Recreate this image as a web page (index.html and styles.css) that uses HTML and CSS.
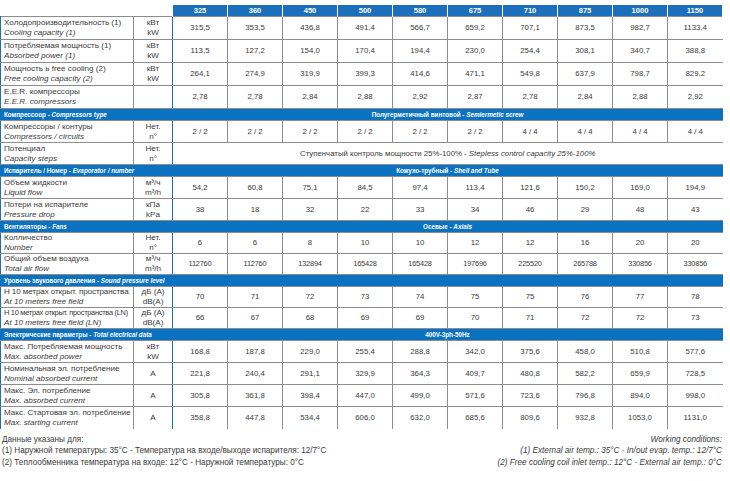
FILE: index.html
```html
<!DOCTYPE html>
<html lang="ru">
<head>
<meta charset="utf-8">
<title>Технические характеристики</title>
<link rel="stylesheet" href="styles.css">
</head>
<body>
<table class="spec">
  <colgroup>
    <col class="c-label"><col class="c-unit">
    <col class="c-val"><col class="c-val"><col class="c-val"><col class="c-val"><col class="c-val">
    <col class="c-val"><col class="c-val"><col class="c-val"><col class="c-val"><col class="c-val">
  </colgroup>
  <thead>
    <tr class="head">
      <th class="blank"></th><th class="blank"></th>
      <th>325</th><th>360</th><th>450</th><th>500</th><th>580</th><th>675</th><th>710</th><th>875</th><th>1000</th><th>1150</th>
    </tr>
  </thead>
  <tbody>
    <tr class="r23">
      <td class="lbl">Холодопроизводительность (1)<br><i>Cooling capacity (1)</i></td>
      <td class="unit">кВт<br>kW</td>
      <td>315,5</td><td>353,5</td><td>436,8</td><td>491,4</td><td>566,7</td><td>659,2</td><td>707,1</td><td>873,5</td><td>982,7</td><td>1133,4</td>
    </tr>
    <tr class="r23">
      <td class="lbl">Потребляемая мощность (1)<br><i>Absorbed power (1)</i></td>
      <td class="unit">кВт<br>kW</td>
      <td>113,5</td><td>127,2</td><td>154,0</td><td>170,4</td><td>194,4</td><td>230,0</td><td>254,4</td><td>308,1</td><td>340,7</td><td>388,8</td>
    </tr>
    <tr class="r23">
      <td class="lbl">Мощность ь free cooling (2)<br><i>Free cooling capacity (2)</i></td>
      <td class="unit">кВт<br>kW</td>
      <td>264,1</td><td>274,9</td><td>319,9</td><td>399,3</td><td>414,6</td><td>471,1</td><td>549,8</td><td>637,9</td><td>798,7</td><td>829,2</td>
    </tr>
    <tr class="r23">
      <td class="lbl">E.E.R. компрессоры<br><i>E.E.R. compressors</i></td>
      <td class="unit"></td>
      <td>2,78</td><td>2,78</td><td>2,84</td><td>2,88</td><td>2,92</td><td>2,87</td><td>2,78</td><td>2,84</td><td>2,88</td><td>2,92</td>
    </tr>

    <tr class="sec">
      <td colspan="2" class="sec-lbl">Компрессоор - <i>Compressors type</i></td>
      <td colspan="10" class="sec-val">Полугерметичный винтовой - <i>Semiermetic screw</i></td>
    </tr>
    <tr class="r22">
      <td class="lbl">Компрессоры / контуры<br><i>Compressors / circuits</i></td>
      <td class="unit">Нет.<br>n°</td>
      <td>2 / 2</td><td>2 / 2</td><td>2 / 2</td><td>2 / 2</td><td>2 / 2</td><td>2 / 2</td><td>4 / 4</td><td>4 / 4</td><td>4 / 4</td><td>4 / 4</td>
    </tr>
    <tr class="r22">
      <td class="lbl">Потенциал<br><i>Capacity steps</i></td>
      <td class="unit">Нет.<br>n°</td>
      <td colspan="10" class="span">Ступенчатый контроль мощности 25%-100% - <i>Stepless control capacity 25%-100%</i></td>
    </tr>

    <tr class="sec">
      <td colspan="2" class="sec-lbl">Испаритель / Номер - <i>Evaporator / number</i></td>
      <td colspan="10" class="sec-val">Кожухо-трубный - <i>Shell and Tube</i></td>
    </tr>
    <tr class="r22">
      <td class="lbl">Объем жидкости<br><i>Liquid flow</i></td>
      <td class="unit">м³/ч<br>m³/h</td>
      <td>54,2</td><td>60,8</td><td>75,1</td><td>84,5</td><td>97,4</td><td>113,4</td><td>121,6</td><td>150,2</td><td>169,0</td><td>194,9</td>
    </tr>
    <tr class="r22">
      <td class="lbl">Потери на испарителе<br><i>Pressure drop</i></td>
      <td class="unit">кПа<br>kPa</td>
      <td>38</td><td>18</td><td>32</td><td>22</td><td>33</td><td>34</td><td>46</td><td>29</td><td>48</td><td>43</td>
    </tr>

    <tr class="sec">
      <td colspan="2" class="sec-lbl">Вентиляторы - <i>Fans</i></td>
      <td colspan="10" class="sec-val">Осевые - <i>Axials</i></td>
    </tr>
    <tr class="r21">
      <td class="lbl">Колличество<br><i>Number</i></td>
      <td class="unit">Нет.<br>n°</td>
      <td>6</td><td>6</td><td>8</td><td>10</td><td>10</td><td>12</td><td>12</td><td>16</td><td>20</td><td>20</td>
    </tr>
    <tr class="r21">
      <td class="lbl">Общий объем воздуха<br><i>Total air flow</i></td>
      <td class="unit">м³/ч<br>m³/h</td>
      <td class="sm">112760</td><td class="sm">112760</td><td class="sm">132894</td><td class="sm">165428</td><td class="sm">165428</td><td class="sm">197696</td><td class="sm">225520</td><td class="sm">265788</td><td class="sm">330856</td><td class="sm">330856</td>
    </tr>

    <tr class="sec">
      <td colspan="2" class="sec-lbl">Уровень звукового давления - <i>Sound pressure level</i></td>
      <td colspan="10" class="sec-val"></td>
    </tr>
    <tr class="r21">
      <td class="lbl"><span class="snug">Н 10 метрах открыт. пространства</span><br><i>At 10 meters free field</i></td>
      <td class="unit">дБ (A)<br>dB(A)</td>
      <td>70</td><td>71</td><td>72</td><td>73</td><td>74</td><td>75</td><td>75</td><td>76</td><td>77</td><td>78</td>
    </tr>
    <tr class="r21">
      <td class="lbl"><span class="tight">Н 10 метрах открыт. пространства (LN)</span><br><i>At 10 meters free field (LN)</i></td>
      <td class="unit">дБ (A)<br>dB(A)</td>
      <td>66</td><td>67</td><td>68</td><td>69</td><td>69</td><td>70</td><td>71</td><td>72</td><td>72</td><td>73</td>
    </tr>

    <tr class="sec">
      <td colspan="2" class="sec-lbl">Электрические параметры - <i>Total electrical data</i></td>
      <td colspan="10" class="sec-val">400V-3ph-50Hz</td>
    </tr>
    <tr class="r22">
      <td class="lbl">Макс. Потребляемая мощность<br><i>Max. absorbed power</i></td>
      <td class="unit">кВт<br>kW</td>
      <td>168,8</td><td>187,8</td><td>229,0</td><td>255,4</td><td>288,8</td><td>342,0</td><td>375,6</td><td>458,0</td><td>510,8</td><td>577,6</td>
    </tr>
    <tr class="r22">
      <td class="lbl">Номинальная эл. потребление<br><i>Nominal absorbed current</i></td>
      <td class="unit">A</td>
      <td>221,8</td><td>240,4</td><td>291,1</td><td>329,9</td><td>364,3</td><td>409,7</td><td>480,8</td><td>582,2</td><td>659,9</td><td>728,5</td>
    </tr>
    <tr class="r22">
      <td class="lbl">Макс. Эл. потребление<br><i>Max. absorbed current</i></td>
      <td class="unit">A</td>
      <td>305,8</td><td>361,8</td><td>398,4</td><td>447,0</td><td>499,0</td><td>571,6</td><td>723,6</td><td>796,8</td><td>894,0</td><td>998,0</td>
    </tr>
    <tr class="r22 last">
      <td class="lbl">Макс. Стартовая эл. потребление<br><i>Max. starting current</i></td>
      <td class="unit">A</td>
      <td>358,8</td><td>447,8</td><td>534,4</td><td>606,0</td><td>632,0</td><td>685,6</td><td>809,6</td><td>932,8</td><td>1053,0</td><td>1131,0</td>
    </tr>
  </tbody>
</table>

<div class="notes">
  <div class="notes-ru">
    <div>Данные указаны для:</div>
    <div>(1) Наружной температуры: 35°C - Температура на входе/выходе испарителя: 12/7°C</div>
    <div>(2) Теплообменника температура на входе: 12°C - Наружной температуры: 0°C</div>
  </div>
  <div class="notes-en">
    <div>Working conditions:</div>
    <div>(1) External air temp.: 35°C - In/out evap. temp.: 12/7°C</div>
    <div>(2) Free cooling coil inlet temp.: 12°C - External air temp.: 0°C</div>
  </div>
</div>
</body>
</html>
```

FILE: styles.css
```css
html, body {
  margin: 0;
  padding: 0;
  background: #ffffff;
}

body {
  padding-top: 5px;
  font-family: "Liberation Sans", Arial, sans-serif;
  color: #3a3a3a;
  width: 730px;
}

.spec {
  border-collapse: collapse;
  table-layout: fixed;
  width: 722px;
}

.c-label { width: 133px; }
.c-unit { width: 39px; }
.c-val { width: 55px; }

.spec th,
.spec td {
  padding: 0;
  box-sizing: border-box;
}

/* column header */
.head th {
  height: 11px;
  background: #1c6fba;
  color: #ffffff;
  font-size: 7.6px;
  font-weight: bold;
  text-align: center;
  line-height: 11px;
  border-left: 1px solid #ffffff;
  border-right: 1px solid #ffffff;
}

.head th.blank {
  background: transparent;
  border: none;
}

/* body rows */
.spec tbody td {
  border: 1px solid #8d8d8d;
  font-size: 7.8px;
  text-align: center;
  vertical-align: middle;
  line-height: 10px;
}

.r23 td { height: 23px; }
.r22 td { height: 22px; }
.r21 td { height: 21px; }

.spec tbody td.lbl {
  text-align: left;
  padding-left: 3px;
  font-size: 8.1px;
  line-height: 9.8px;
  border-left: 1px solid #1c6fba;
  white-space: nowrap;
  overflow: hidden;
}

.spec tbody td.unit {
  font-size: 8.1px;
  line-height: 9.8px;
  border-right: 1px solid #1c6fba;
  white-space: nowrap;
}

.snug {
  letter-spacing: -0.12px;
}

.tight {
  font-size: 7.5px;
  letter-spacing: -0.32px;
}

.spec tbody td.sm {
  font-size: 7.4px;
  letter-spacing: -0.2px;
}

.spec tbody td.span {
  font-size: 7.8px;
  border-right: none;
}

/* section bars */
.sec td {
  height: 11px;
  background: #0b72c1;
  color: #ffffff;
  font-weight: bold;
  white-space: nowrap;
}

.spec tbody .sec td {
  border-left: none;
  border-right: none;
  font-size: 6.3px;
  line-height: 11px;
}

.spec tbody .sec td.sec-lbl {
  text-align: left;
  padding-left: 3px;
  border-left: 1px solid #0b72c1;
}

.spec tbody .sec td.sec-val {
  text-align: center;
}

.spec tbody tr.last td {
  border-bottom: none;
}

.spec tbody tr td:last-child {
  border-right: none;
}

/* notes */
.notes {
  display: flex;
  justify-content: space-between;
  width: 722px;
  margin-top: 5px;
  font-size: 8.2px;
  line-height: 11.8px;
}

.notes-ru {
  padding-left: 2px;
}

.notes-en {
  text-align: right;
  font-style: italic;
}
```
